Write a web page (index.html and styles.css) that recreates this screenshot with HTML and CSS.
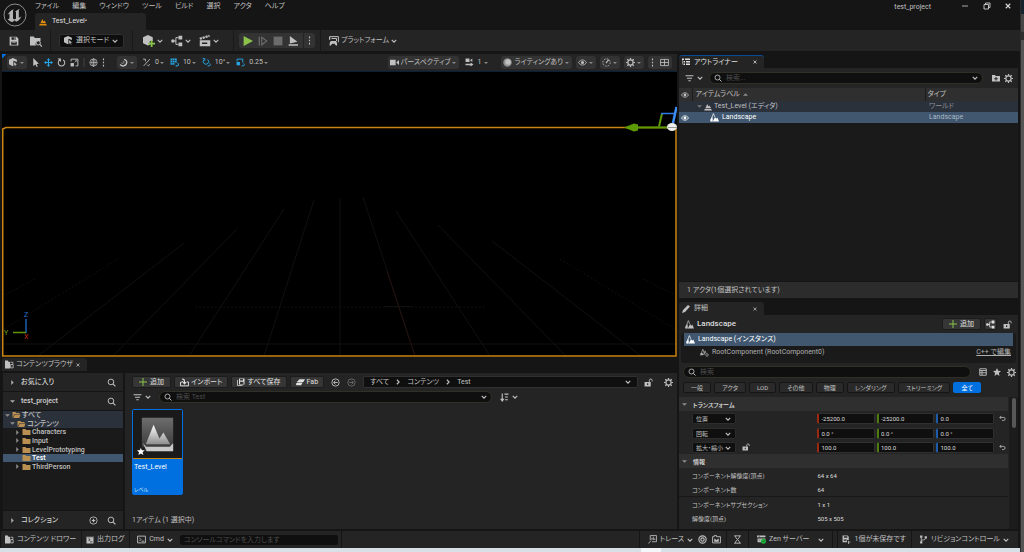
FILE: index.html
```html
<!DOCTYPE html>
<html lang="ja">
<head>
<meta charset="utf-8">
<meta name="viewport" content="width=device-width, initial-scale=1">
<title>test_project</title>
<link rel="stylesheet" href="styles.css">
</head>
<body>
<svg class="sprite" aria-hidden="true">
  <symbol id="chev" viewBox="0 0 8 8"><path d="M1 2.500 4 5.500 7 2.500" fill="none" stroke="currentColor" stroke-width="1.500"/></symbol>
  <symbol id="chevr" viewBox="0 0 8 8"><path d="M2.500 1 5.500 4 2.500 7" fill="none" stroke="currentColor" stroke-width="1.500"/></symbol>
  <symbol id="caret" viewBox="0 0 8 8"><path d="M0 2h8L4 6z" fill="currentColor"/></symbol>
  <symbol id="tri-r" viewBox="0 0 8 8"><path d="M2 0 6 4 2 8z" fill="currentColor"/></symbol>
  <symbol id="tri-u" viewBox="0 0 8 8"><path d="M0 6h8L4 2z" fill="currentColor"/></symbol>
  <symbol id="x" viewBox="0 0 8 8"><path d="M1 1 7 7M7 1 1 7" stroke="currentColor" stroke-width="1.500"/></symbol>
  <symbol id="search" viewBox="0 0 16 16"><circle cx="7" cy="7" r="5" fill="none" stroke="currentColor" stroke-width="1.700"/><path d="m10.500 10.500 4.500 4.500" stroke="currentColor" stroke-width="2"/></symbol>
  <symbol id="filter" viewBox="0 0 16 16"><path d="M1 3h14M3.500 7.500h9M6 12h4" stroke="currentColor" stroke-width="2"/></symbol>
  <symbol id="gear" viewBox="0 0 16 16"><circle cx="8" cy="8" r="4.600" fill="none" stroke="currentColor" stroke-width="2"/><path d="M8 0v3M8 13v3M0 8h3M13 8h3M2.300 2.300l2.200 2.200M11.500 11.500l2.200 2.200M13.700 2.300l-2.200 2.200M4.500 11.500l-2.200 2.200" stroke="currentColor" stroke-width="2.200"/></symbol>
  <symbol id="eye" viewBox="0 0 16 16"><path d="M1 8c3.500-6 10.500-6 14 0-3.500 6-10.500 6-14 0z" fill="none" stroke="currentColor" stroke-width="1.500"/><circle cx="8" cy="8" r="2.800" fill="currentColor"/></symbol>
  <symbol id="dots" viewBox="0 0 4 16"><path d="M1 1h2v3H1zM1 6.500h2v3H1zM1 12h2v3H1z" fill="currentColor"/></symbol>
  <symbol id="save" viewBox="0 0 16 16"><path fill-rule="evenodd" d="M1 1h11l3 3v11H1zM4 2v4h7V2zM3.500 9v5h9V9z" fill="currentColor"/><path d="M5 10.500h6M8.500 2.500h1.500v3H8.500z" stroke="currentColor"/></symbol>
  <symbol id="saveall" viewBox="0 0 16 16"><path d="M1 4v11h10" fill="none" stroke="currentColor" stroke-width="1.500"/><path fill-rule="evenodd" d="M4 1h11v12H4zM6 2v3h6V2zM6 7.500V12h7V7.500z" fill="currentColor"/></symbol>
  <symbol id="savewarn" viewBox="0 0 16 16"><path fill-rule="evenodd" d="M1 1h9l2 2v6H9v4H1zM3.500 2v3h6V2zM3 7v1h6V7zM3 9.500v1h5v-1z" fill="currentColor"/><path d="M11 10h1.500v2H15v1.500h-2.500V16H11z" fill="currentColor"/></symbol>
  <symbol id="browse" viewBox="0 0 16 16"><path d="M0 2h5l1.500 2H14v4h-2.500a3.500 3.500 0 0 0-3 6H0z" fill="currentColor"/><circle cx="11" cy="10.500" r="2.800" fill="none" stroke="currentColor" stroke-width="1.300"/><path d="m13 12.500 3 3" stroke="currentColor" stroke-width="1.500"/></symbol>
  <symbol id="drawer" viewBox="0 0 16 16"><path d="M0 1h5l1 2h3v12H0z" fill="currentColor"/><path d="M10 4h4v3M10 8h4.500v6H10z" fill="none" stroke="currentColor" stroke-width="1.500"/></symbol>
  <symbol id="mode" viewBox="0 0 16 16"><path d="M7 0 14 3v4L8 5v9l-1 .500L0 11V3z" fill="currentColor"/><path d="m8.500 6 6.500 6-3 .400 1.500 3-1.500.600-1.500-3-2 2z" fill="currentColor" stroke="#111" stroke-width=".8"/></symbol>
  <symbol id="addactor" viewBox="0 0 16 16"><path d="M6.500 0 13 3v5H9v5l-2.500 1L0 11V3z" fill="currentColor"/><path d="M11.500 7v9M7 11.500h9" stroke="#8bc34a" stroke-width="2.400"/></symbol>
  <symbol id="nodes" viewBox="0 0 16 16"><path d="M3 8h4M6.500 8V3.500H10M6.500 8v4.500H10" fill="none" stroke="currentColor" stroke-width="1.300"/><circle cx="2.500" cy="8" r="2.300" fill="currentColor"/><path d="M10 1h5v5h-5zM10 10h5v5h-5z" fill="currentColor"/></symbol>
  <symbol id="clap" viewBox="0 0 16 16"><path fill-rule="evenodd" d="M1 7h14v8H1zM4 10v2h7v-2z" fill="currentColor"/><path d="m1 5 13-4" stroke="currentColor" stroke-width="3" stroke-dasharray="3 1"/></symbol>
  <symbol id="play" viewBox="0 0 16 16"><path d="M1 0 16 8 1 16z" fill="currentColor"/></symbol>
  <symbol id="step" viewBox="0 0 16 16"><path d="M1 1h2v14H1z" fill="currentColor"/><path d="M6 2 14 8 6 14z" fill="none" stroke="currentColor" stroke-width="1.800"/></symbol>
  <symbol id="stop" viewBox="0 0 16 16"><path d="M1 1h14v14H1z" fill="currentColor"/></symbol>
  <symbol id="launch" viewBox="0 0 16 16"><path d="M3 0 15 9 3 12zM1 13h15v2.500H1z" fill="currentColor"/></symbol>
  <symbol id="platform" viewBox="0 0 16 16"><path d="M1 1h14v9M4 4h8v4" fill="none" stroke="currentColor" stroke-width="1.600"/><path d="M0 1h2v5H0zM3 8h8c1.500 1 2 3.500 2 7h-2l-2-2.500H5L3 15H1c0-3.500.500-6 2-7z" fill="currentColor"/></symbol>
  <symbol id="cursor" viewBox="0 0 16 16"><path d="M4 0 14 10l-4 .500 2 4.500-2 1-2-4.500L4 14z" fill="currentColor"/></symbol>
  <symbol id="move" viewBox="0 0 16 16"><path d="M8 2v12M2 8h12" stroke="currentColor" stroke-width="1.800"/><path d="M8 0l3 4H5zM8 16l3-4H5zM0 8l4-3v6zM16 8l-4-3v6z" fill="currentColor"/></symbol>
  <symbol id="rotate" viewBox="0 0 16 16"><path d="M5 3.500a5.800 5.800 0 1 0 6 0" fill="none" stroke="currentColor" stroke-width="1.800"/><path d="M1 1h6v6z" fill="currentColor"/></symbol>
  <symbol id="scale" viewBox="0 0 16 16"><path d="M2 6V2h12v12h-4" fill="none" stroke="currentColor" stroke-width="1.600"/><path d="M1 9h6v6H1z" fill="currentColor"/><path d="m8 8 4-4M9 4h3v3" fill="none" stroke="currentColor"/></symbol>
  <symbol id="globe" viewBox="0 0 16 16"><g fill="none" stroke="currentColor" stroke-width="1.200"><circle cx="8" cy="8" r="6.500"/><ellipse cx="8" cy="8" rx="3" ry="6.500"/><path d="M8 1v14M1.500 8h13"/></g></symbol>
  <symbol id="magnet" viewBox="0 0 16 16"><path d="M2 11.500c4 4 9 3 11-1s0-7-4-8" fill="none" stroke="currentColor" stroke-width="2.600"/><path d="M4 8.500c3 2.500 6 0 4-3.500" fill="none" stroke="currentColor" stroke-width="1.200"/></symbol>
  <symbol id="surf" viewBox="0 0 16 16"><path d="m3 14 11-12M2 2h4v4M9 12c2 3 5 1 4-1" fill="none" stroke="currentColor" stroke-width="1.600"/></symbol>
  <symbol id="gridsnap" viewBox="0 0 16 16"><path d="M1 1h11v8H8v3H1z" fill="currentColor"/><path d="M1 4.500h11M1 8h11M4.500 1v11M8 1v8" stroke="#242424" stroke-width=".8"/><path d="M10 14h2.500c3 0 3-4 1-4.500" fill="none" stroke="currentColor" stroke-width="1.800"/></symbol>
  <symbol id="rotsnap" viewBox="0 0 16 16"><path d="M4 2.500a4.800 4.800 0 1 0 6 0M1 1h4v4M10 14h2.500c3 0 3-4 1-4.500" fill="none" stroke="currentColor" stroke-width="1.700"/></symbol>
  <symbol id="sclsnap" viewBox="0 0 16 16"><path d="M2 6V2h10v6M10 14h2.500c3 0 3-4 1-4.500" fill="none" stroke="currentColor" stroke-width="1.700"/><path d="M1 7h6v6H1z" fill="currentColor"/></symbol>
  <symbol id="cam" viewBox="0 0 16 16"><path d="M0 3h10v10H0zM11 8l5-4.500v9z" fill="currentColor"/></symbol>
  <symbol id="camspeed" viewBox="0 0 16 16"><path d="M1 1h7v6H1zM9 4l4-3v6zM2 10h8V8l5 3.500L10 15v-2H2zM0 10h1v3H0z" fill="currentColor"/></symbol>
  <symbol id="ball" viewBox="0 0 16 16"><circle cx="8" cy="8" r="7.500" fill="#8f8f8f"/><circle cx="9" cy="7" r="5" fill="currentColor"/></symbol>
  <symbol id="gauge" viewBox="0 0 16 16"><circle cx="8" cy="8" r="6.500" fill="none" stroke="currentColor" stroke-width="1.500" stroke-dasharray="3 2"/><path d="m7 9 5-6" stroke="currentColor" stroke-width="2"/></symbol>
  <symbol id="quad" viewBox="0 0 16 16"><path d="M1 2.500h14v11H1zM8 2.500v11M1 8h14" fill="none" stroke="currentColor" stroke-width="1.500"/></symbol>
  <symbol id="outl" viewBox="0 0 16 16"><path d="M0 1h4v3H0zM6 1h10v3H6zM3 6h3v3H3zM8 6h8v3H8zM3 11h3v3H3zM8 11h8v3H8zM1 4h1v9H1z" fill="currentColor"/></symbol>
  <symbol id="foldadd" viewBox="0 0 16 16"><path fill-rule="evenodd" d="M0 2h6l1.500 2H16v11H0zM7 6v2.500H4.500v2H7V13h2v-2.500h2.500v-2H9V6z" fill="currentColor"/></symbol>
  <symbol id="fold" viewBox="0 0 16 12"><path d="M0 0h6l1.500 2H16v10H0z" fill="currentColor"/></symbol>
  <symbol id="foldopen" viewBox="0 0 16 12"><path d="M0 12V0h6l1.500 2H14v2H4zM4.500 5H16l-2.500 7H1.500z" fill="currentColor"/></symbol>
  <symbol id="level" viewBox="0 0 16 16"><path d="M3 10 6.500 2 9 7l2-2 3 5zM0 15l2-3.500h12L16 15z" fill="currentColor"/></symbol>
  <symbol id="land" viewBox="0 0 16 16"><path d="M1 14 6 1l2.500 6M1 14h5" fill="none" stroke="currentColor" stroke-width="1.300"/><path d="m5 15 4-8 2 3 2-2 3 7zM1 11l3-4 1 4-1 4H1z" fill="currentColor"/></symbol>
  <symbol id="comp" viewBox="0 0 16 16"><path d="m1 13 4-11 3 9M4 10l3 2 2-7 2 5" fill="none" stroke="currentColor" stroke-width="1.300"/><path d="M1 9h4v4H1z" fill="currentColor"/><circle cx="12.500" cy="12.500" r="2.300" fill="none" stroke="currentColor" stroke-width="1.200"/></symbol>
  <symbol id="pencil" viewBox="0 0 16 16"><path d="m0 16 2-6L12 0l4 3L6 14z" fill="currentColor"/></symbol>
  <symbol id="lock" viewBox="0 0 16 16"><path fill-rule="evenodd" d="M1 7h11v8H1zM5.500 9.500v3h2v-3z" fill="currentColor"/><path d="M9.500 7V4c0-3 5-3 5 0v2" fill="none" stroke="currentColor" stroke-width="1.600"/></symbol>
  <symbol id="table" viewBox="0 0 16 16"><path d="M1.500 1.500h13v13h-13zM1 5h14M1 9.500h14M6 5v9" fill="none" stroke="currentColor" stroke-width="1.800"/></symbol>
  <symbol id="star" viewBox="0 0 16 16"><path d="m8 0 2.300 5.500L16 6l-4.300 3.800L13 16l-5-3.400L3 16l1.300-6.200L0 6l5.700-.500z" fill="currentColor"/></symbol>
  <symbol id="plus" viewBox="0 0 16 16"><path d="M8 0v16M0 8h16" stroke="#8bc34a" stroke-width="2"/></symbol>
  <symbol id="import" viewBox="0 0 16 16"><path d="M1 7v7h14V7h-3M1 8l4-2" fill="none" stroke="currentColor" stroke-width="1.700"/><path d="M4 1c4 0 5 2 5 6h3l-4 5-4-5h3c0-3-1-4-3-4z" fill="currentColor"/></symbol>
  <symbol id="fab" viewBox="0 0 16 16"><path d="M4 5c0-2 2-3 4-3h8l-3 5H1zM0 11c0-2 2-3 4-3h8l-3 5H2c-1 0-2-1-2-2z" fill="currentColor"/></symbol>
  <symbol id="back" viewBox="0 0 16 16"><circle cx="8" cy="8" r="6.500" fill="none" stroke="currentColor" stroke-width="1.600"/><path d="M12 8H5M8 4.500 4.500 8 8 11.500" fill="none" stroke="currentColor" stroke-width="1.600"/></symbol>
  <symbol id="fwd" viewBox="0 0 16 16"><circle cx="8" cy="8" r="6.500" fill="none" stroke="currentColor" stroke-width="1.600"/><path d="M4 8h7M8 4.500 11.500 8 8 11.500" fill="none" stroke="currentColor" stroke-width="1.600"/></symbol>
  <symbol id="sort" viewBox="0 0 16 16"><path d="M4 1v12M8 2h7M9 7h5M9 12h5" fill="none" stroke="currentColor" stroke-width="2"/><path d="M0 10h8l-4 6z" fill="currentColor"/></symbol>
  <symbol id="circadd" viewBox="0 0 16 16"><circle cx="8" cy="8" r="6.500" fill="none" stroke="currentColor" stroke-width="1.500"/><path d="M8 5v6M5 8h6" stroke="currentColor" stroke-width="2"/></symbol>
  <symbol id="log" viewBox="0 0 16 16"><path fill-rule="evenodd" d="M1 1h2v2h2V1h2v2h2V1h2v2h2V1h2v14H1zM4 5l3 2.500L4 10h2l3-2.500L6 5zM8 11v1.500h5V11z" fill="currentColor"/></symbol>
  <symbol id="term" viewBox="0 0 16 16"><path d="M1 2h14v12H1zM4 5l3 3-3 3M8 11h5" fill="none" stroke="currentColor" stroke-width="1.600"/></symbol>
  <symbol id="trace" viewBox="0 0 16 16"><path d="M4 9V1h11v11H7M7 9V5M9.500 9V3M12 9V6M5 10l-4 5" fill="none" stroke="currentColor" stroke-width="1.500"/></symbol>
  <symbol id="rec" viewBox="0 0 16 16"><circle cx="8" cy="8" r="6.500" fill="none" stroke="currentColor" stroke-width="2"/><circle cx="8" cy="8" r="3" fill="none" stroke="currentColor" stroke-width="2"/></symbol>
  <symbol id="snap" viewBox="0 0 16 16"><path d="M1 3h3V1h4v2h7v11H1z" fill="none" stroke="currentColor" stroke-width="1.600"/><path d="M4 12V6l4 3 4-3v6z" fill="currentColor"/></symbol>
  <symbol id="hour" viewBox="0 0 16 16"><path d="M2 1.500h12M2 14.500h12M4 2c0 4 8 8 8 12M12 2c0 4-8 8-8 12" fill="none" stroke="currentColor" stroke-width="1.600"/></symbol>
  <symbol id="zen" viewBox="0 0 16 16"><path d="M0 1h15v3H0zM1 6h14v2L8 11v2H1z" fill="currentColor"/><path d="M3 2.500h2M3 9h3" stroke="#242424"/><circle cx="11.500" cy="11" r="4.500" fill="#1fb03a"/><path d="m9.500 11 1.500 1.500 2.500-3" fill="none" stroke="#0c5a1b"/></symbol>
  <symbol id="branch" viewBox="0 0 16 16"><path d="M4 3v10M4 9c6 0 8-1 8-5" fill="none" stroke="currentColor" stroke-width="1.500"/><path d="M2 1h4v4H2zM2 11h4v4H2zM10 2h4v4h-4z" fill="currentColor"/></symbol>
  <symbol id="undo" viewBox="0 0 16 16"><path d="M5 2 2 5.500 5 9M2 5.500h9c4 0 4 7 0 7H7" fill="none" stroke="currentColor" stroke-width="1.800"/></symbol>
  <symbol id="min" viewBox="0 0 16 16"><path d="M2 8h12" stroke="currentColor" stroke-width="1.500"/></symbol>
  <symbol id="restore" viewBox="0 0 16 16"><path d="M2 5h9v9H2zM5 5V2h9v9h-3" fill="none" stroke="currentColor" stroke-width="1.700"/></symbol>
</svg>

<div class="screen">
<div class="window">
  <header class="titlebar">
    <svg class="logo" viewBox="0 0 24 24" role="img" aria-label="Unreal Engine"><circle cx="12" cy="12" r="11" fill="#151515" stroke="#8d8d8d" stroke-width="1"/><path d="M4.500 12.500C5.500 9 8 7 11 6.200c-1 .8-1 1.500-1 2.300V15c0 1 .8 1.500 1.800 1.200.5-.2 1-.5 1.200-.8V9.500c0-.8-.5-1-1.200-1 1.500-.8 3-2 5.200-2.800-1 1-1.200 1.600-1.200 2.500v6.300c.8.2 1.700-.4 2.700-1.500-1 3-3 5-5.500 5.800l-1.200-1.500-2.300 1.800c-2-.2-4-1.500-5-3.300 1 .5 2 .2 2-1v-3.500c0-1-.8-.8-2 1.200z" fill="#b4b4b4"/></svg>
    <div class="titlemain">
      <nav class="menu"><button>ファイル</button><button>編集</button><button>ウィンドウ</button><button>ツール</button><button>ビルド</button><button>選択</button><button>アクタ</button><button>ヘルプ</button></nav>
      <div class="doctab"><svg class="i8 orange"><use href="#level"/></svg>Test_Level•</div>
    </div>
    <span class="project">test_project</span>
    <div class="winctl"><button aria-label="最小化"><svg class="i8"><use href="#min"/></svg></button><button aria-label="元に戻す"><svg class="i8"><use href="#restore"/></svg></button><button aria-label="閉じる"><svg class="i6"><use href="#x"/></svg></button></div>
  </header>

  <div class="maintools">
    <div class="tgroup files"><button aria-label="保存"><svg class="i10"><use href="#save"/></svg></button><button aria-label="参照"><svg class="i12"><use href="#browse"/></svg></button></div>
    <div class="tgroup"><button class="modebtn"><svg class="i9"><use href="#mode"/></svg>選択モード<svg class="i6"><use href="#chev"/></svg></button></div>
    <div class="tgroup adders"><button aria-label="追加"><svg class="i12"><use href="#addactor"/></svg><svg class="i6"><use href="#chev"/></svg></button><button aria-label="ブループリント"><svg class="i12"><use href="#nodes"/></svg><svg class="i6"><use href="#chev"/></svg></button><button aria-label="シネマティクス"><svg class="i12"><use href="#clap"/></svg><svg class="i6"><use href="#chev"/></svg></button></div>
    <div class="tgroup plays"><div class="playbox"><button class="green" aria-label="プレイ"><svg class="i10"><use href="#play"/></svg></button><button class="dim" aria-label="ステップ"><svg class="i10"><use href="#step"/></svg></button><button class="dim" aria-label="停止"><svg class="i10"><use href="#stop"/></svg></button><button aria-label="起動"><svg class="i10"><use href="#launch"/></svg></button><button class="playmore" aria-label="その他"><svg class="idots"><use href="#dots"/></svg></button></div></div>
    <div class="tgroup last"><button><svg class="i10"><use href="#platform"/></svg>プラットフォーム<svg class="i6"><use href="#chev"/></svg></button></div>
  </div>

  <main class="work">
    <div class="col">
      <section class="viewport">
        <div class="vtools">
          <button class="pill" aria-label="モード"><svg class="i9"><use href="#mode"/></svg><svg class="i3"><use href="#caret"/></svg></button>
          <div class="xf"><button aria-label="選択"><svg class="i9"><use href="#cursor"/></svg></button><button class="cyan" aria-label="移動"><svg class="i9"><use href="#move"/></svg></button><button aria-label="回転"><svg class="i9"><use href="#rotate"/></svg></button><button aria-label="拡大"><svg class="i9"><use href="#scale"/></svg></button></div>
          <div class="coord"><button aria-label="座標系"><svg class="i9"><use href="#globe"/></svg></button><button aria-label="その他"><svg class="idots"><use href="#dots"/></svg></button></div>
          <button class="pill" aria-label="スナップ"><svg class="i9"><use href="#magnet"/></svg><svg class="i3"><use href="#caret"/></svg></button>
          <div class="snaps"><button><svg class="i9"><use href="#surf"/></svg>0<svg class="i3"><use href="#caret"/></svg></button><button><svg class="i9 cyan"><use href="#gridsnap"/></svg>10<svg class="i3"><use href="#caret"/></svg></button><button><svg class="i9 cyan"><use href="#rotsnap"/></svg>10°<svg class="i3"><use href="#caret"/></svg></button><button><svg class="i9 cyan"><use href="#sclsnap"/></svg>0.25<svg class="i3"><use href="#caret"/></svg></button></div>
          <div class="vright"><button class="pill"><svg class="i9"><use href="#cam"/></svg>パースペクティブ<svg class="i3"><use href="#caret"/></svg></button><button class="speed"><svg class="i9"><use href="#camspeed"/></svg>1<svg class="i3"><use href="#caret"/></svg></button><button class="pill"><svg class="i9"><use href="#ball"/></svg>ライティングあり<svg class="i3"><use href="#caret"/></svg></button><button class="pill" aria-label="表示"><svg class="i9"><use href="#eye"/></svg><svg class="i3"><use href="#caret"/></svg></button><button class="pill" aria-label="スケーラビリティ"><svg class="i9"><use href="#gauge"/></svg><svg class="i3"><use href="#caret"/></svg></button><button class="pill" aria-label="設定"><svg class="i9"><use href="#gear"/></svg><svg class="i3"><use href="#caret"/></svg></button><div class="pill pair"><button aria-label="その他"><svg class="idots"><use href="#dots"/></svg></button><button aria-label="4 画面"><svg class="i9"><use href="#quad"/></svg></button></div></div>
        </div>
        <div class="scene">
          <svg class="floor" viewBox="2 71 675 285" preserveAspectRatio="none" aria-hidden="true">
            <g stroke="#101010" fill="none"><path d="M340 198v157M363 196l52 159M396 210l94 145M438 224l128 131M492 240l149 115M314 199l-50 156M284 208l-95 147M237 228 113 355M184 242 38 355M4 343h672"/><path d="M560 258l115 70M643 278l32 16M118 258 4 328M35 278 4 294M195 306h290" stroke-dasharray="2 2"/><path d="M384 305.500h28"/><path d="M387 270l28 85" stroke="#241010"/></g>
            <path d="M2.750 355V128l3-1.500H676V355z" fill="none" stroke="#c98412" stroke-width="1.500"/>
          </svg>
          <svg class="axes" viewBox="0 0 32 32" aria-hidden="true"><path d="M24 9v14" stroke="#1d5fb4" stroke-width="1.500"/><path d="M11 22.500h13" stroke="#5d9409" stroke-width="1.500"/><text x="22" y="7" fill="#2a74d0">Z</text><text x="2" y="25" fill="#6ba00c">Y</text><text x="22" y="29" fill="#c62b10">X</text></svg>
          <svg class="gizmo" viewBox="0 0 54 26" aria-hidden="true"><path d="M36 20.500 39 7.500" stroke="#5d9b06" stroke-width="2"/><path d="M38 7.500h15" stroke="#2b7be8" stroke-width="1.500"/><path d="m50 17 3.500-16" stroke="#3c8df5" stroke-width="2.500"/><path d="M14 21.500h36" stroke="#5d9b06" stroke-width="2"/><path d="m1 21.500 10-4 4 1v6l-4 1z" fill="#5d9b06"/><ellipse cx="49" cy="21" rx="5" ry="4" fill="#eee"/><path d="M45 21.500h9" stroke="#999"/></svg>
        </div>
      </section>

      <section class="browser">
        <div class="tabs"><div class="tab cb"><svg class="i9"><use href="#drawer"/></svg>コンテンツブラウザ<button aria-label="閉じる"><svg class="i4"><use href="#x"/></svg></button></div></div>
        <div class="cbody">
          <aside class="sources">
            <div class="srcrow"><svg class="i5"><use href="#tri-r"/></svg><b>お気に入り</b><button aria-label="検索"><svg class="i9"><use href="#search"/></svg></button></div>
            <div class="srcrow"><svg class="i5"><use href="#caret"/></svg><b>test_project</b><button aria-label="検索"><svg class="i9"><use href="#search"/></svg></button></div>
            <div class="treebox"><ul class="tree">
              <li class="anc"><svg class="i5"><use href="#caret"/></svg><svg class="ifold"><use href="#foldopen"/></svg>すべて</li>
              <li class="anc d1"><svg class="i5"><use href="#caret"/></svg><svg class="ifold"><use href="#foldopen"/></svg>コンテンツ</li>
              <li class="d2"><svg class="i5"><use href="#tri-r"/></svg><svg class="ifold"><use href="#fold"/></svg>Characters</li>
              <li class="d2"><svg class="i5"><use href="#tri-r"/></svg><svg class="ifold"><use href="#fold"/></svg>Input</li>
              <li class="d2"><svg class="i5"><use href="#tri-r"/></svg><svg class="ifold"><use href="#fold"/></svg>LevelPrototyping</li>
              <li class="d2 sel"><span class="i5"></span><svg class="ifold"><use href="#fold"/></svg>Test</li>
              <li class="d2"><svg class="i5"><use href="#tri-r"/></svg><svg class="ifold"><use href="#fold"/></svg>ThirdPerson</li>
            </ul></div>
            <div class="srcrow"><svg class="i5"><use href="#tri-r"/></svg><b>コレクション</b><button aria-label="追加"><svg class="i9"><use href="#circadd"/></svg></button><button aria-label="検索"><svg class="i9"><use href="#search"/></svg></button></div>
          </aside>
          <div class="assets">
            <div class="abar">
              <button class="btn"><svg class="i8"><use href="#plus"/></svg>追加</button><button class="btn"><svg class="i9"><use href="#import"/></svg>インポート</button><button class="btn"><svg class="i8"><use href="#saveall"/></svg>すべて保存</button><button class="btn"><svg class="i9"><use href="#fab"/></svg>Fab</button>
              <div class="hist"><button aria-label="戻る"><svg class="i9"><use href="#back"/></svg></button><button class="dim" aria-label="進む"><svg class="i9"><use href="#fwd"/></svg></button></div>
              <nav class="crumbs"><a href="#">すべて</a><svg class="i6"><use href="#chevr"/></svg><a href="#">コンテンツ</a><svg class="i6"><use href="#chevr"/></svg><a href="#">Test</a><svg class="i6 end"><use href="#chev"/></svg></nav>
              <div class="aend"><button aria-label="ロック"><svg class="i9"><use href="#lock"/></svg></button><button aria-label="設定"><svg class="i9"><use href="#gear"/></svg></button></div>
            </div>
            <div class="afilter"><button class="fbtn" aria-label="フィルタ"><svg class="i9"><use href="#filter"/></svg><svg class="i6"><use href="#chev"/></svg></button><label class="search"><svg class="i8"><use href="#search"/></svg><input type="text" placeholder="検索 Test" aria-label="検索 Test"><svg class="i6"><use href="#chev"/></svg></label><button class="fbtn" aria-label="並べ替え"><svg class="i9"><use href="#sort"/></svg><svg class="i6"><use href="#chev"/></svg></button></div>
            <div class="tiles"><article class="tile"><div class="thumb"><svg viewBox="0 0 48 48" aria-hidden="true"><defs><linearGradient id="bg" x2="0" y2="1"><stop offset="0" stop-color="#6d6d6d"/><stop offset="1" stop-color="#353535"/></linearGradient><linearGradient id="fg" x2="0" y2="1"><stop offset="0" stop-color="#fff"/><stop offset="1" stop-color="#8e8e8e"/></linearGradient></defs><path d="M8 7h32v34H8z" fill="url(#bg)"/><path d="m12 34 8-20 6 14 4-6 7 12z" fill="url(#fg)"/><path d="m9 33 3 3h25l3-3v8H13z" fill="#c9c9c9"/><path d="M12 36h25" stroke="#444"/><path d="M3 37h8v8H3z" fill="#1d1d1d"/><path d="m7 37.500 1 2.500 3 .2-2.200 2 .8 2.800-2.600-1.500L4.400 45l.8-2.800-2.200-2 3-.2z" fill="#fff"/></svg></div><div class="tname">Test_Level</div><div class="ttype">レベル</div></article></div>
            <div class="count">1アイテム (1 選択中)</div>
          </div>
        </div>
      </section>
    </div>

    <div class="col">
      <section class="outliner">
        <div class="tabs"><div class="tab active"><svg class="i8"><use href="#outl"/></svg>アウトライナー<button aria-label="閉じる"><svg class="i4"><use href="#x"/></svg></button></div></div>
        <div class="otools"><button class="fbtn" aria-label="フィルタ"><svg class="i9"><use href="#filter"/></svg><svg class="i6"><use href="#chev"/></svg></button><label class="search"><svg class="i8"><use href="#search"/></svg><input type="text" placeholder="検索..." aria-label="検索"><svg class="i6"><use href="#chev"/></svg></label><button aria-label="フォルダ作成"><svg class="i8"><use href="#foldadd"/></svg></button><button aria-label="設定"><svg class="i9"><use href="#gear"/></svg></button></div>
        <div class="olist">
          <table><thead><tr><th class="ceye"><svg class="i8"><use href="#eye"/></svg></th><th><span>アイテムラベル<svg class="i5"><use href="#tri-u"/></svg></span></th><th class="ctype">タイプ</th></tr></thead>
          <tbody><tr class="anc"><td></td><td><span class="o1"><svg class="i5 grey"><use href="#caret"/></svg><svg class="i8"><use href="#level"/></svg>Test_Level (エディタ)</span></td><td>ワールド</td></tr>
          <tr class="sel"><td class="ceye"><svg class="i8"><use href="#eye"/></svg></td><td><span class="o2"><svg class="i9"><use href="#land"/></svg>Landscape</span></td><td>Landscape</td></tr></tbody></table>
        </div>
        <div class="ofoot">1 アクタ(1個選択されています)</div>
      </section>

      <section class="details">
        <div class="tabs"><div class="tab"><svg class="i8"><use href="#pencil"/></svg>詳細<button aria-label="閉じる"><svg class="i4"><use href="#x"/></svg></button></div></div>
        <div class="dbody">
          <div class="dtitle"><svg class="i9"><use href="#land"/></svg><h2>Landscape</h2><button class="btn"><svg class="i8"><use href="#plus"/></svg>追加</button><button class="btn sq" aria-label="ブループリント"><svg class="i9"><use href="#nodes"/></svg></button><button aria-label="ロック"><svg class="i9"><use href="#lock"/></svg></button></div>
          <div class="comps"><div class="comp sel"><svg class="i9"><use href="#land"/></svg>Landscape (インスタンス)</div><div class="comp sub"><svg class="i9"><use href="#comp"/></svg>RootComponent (RootComponent0)<a href="#">C++ で編集</a></div></div>
          <div class="dsearch"><label class="search"><svg class="i8"><use href="#search"/></svg><input type="text" placeholder="検索" aria-label="検索"></label><button aria-label="表"><svg class="i8"><use href="#table"/></svg></button><button aria-label="お気に入り"><svg class="i8"><use href="#star"/></svg></button><button aria-label="設定"><svg class="i9"><use href="#gear"/></svg></button></div>
          <div class="chips"><button>一般</button><button>アクタ</button><button>LOD</button><button>その他</button><button>物理</button><button>レンダリング</button><button>ストリーミング</button><button class="on">全て</button></div>
          <div class="dscroll">
            <div class="props">
              <h3><svg class="i5"><use href="#caret"/></svg>トランスフォーム</h3>
              <div class="prop"><div class="pname"><label class="sel-w"><select aria-label="位置"><option>位置</option></select><svg class="i6"><use href="#chev"/></svg></label></div><div class="pval"><input class="r" aria-label="位置 X" value="-25200.0"><input class="g" aria-label="位置 Y" value="-25200.0"><input class="b" aria-label="位置 Z" value="0.0"></div><button aria-label="リセット"><svg class="i7"><use href="#undo"/></svg></button></div>
              <div class="prop"><div class="pname"><label class="sel-w"><select aria-label="回転"><option>回転</option></select><svg class="i6"><use href="#chev"/></svg></label></div><div class="pval"><input class="r" aria-label="回転 X" value="0.0 °"><input class="g" aria-label="回転 Y" value="0.0 °"><input class="b" aria-label="回転 Z" value="0.0 °"></div></div>
              <div class="prop"><div class="pname"><label class="sel-w"><select aria-label="拡大・縮小"><option>拡大・縮小</option></select><svg class="i6"><use href="#chev"/></svg></label><button aria-label="比率を固定"><svg class="i8"><use href="#lock"/></svg></button></div><div class="pval"><input class="r" aria-label="拡大 X" value="100.0"><input class="g" aria-label="拡大 Y" value="100.0"><input class="b" aria-label="拡大 Z" value="100.0"></div><button aria-label="リセット"><svg class="i7"><use href="#undo"/></svg></button></div>
              <h3><svg class="i5"><use href="#caret"/></svg>情報</h3>
              <div class="prop"><div class="pname">コンポーネント解像度(頂点)</div><div class="ptext">64 x 64</div></div>
              <div class="prop line"><div class="pname">コンポーネント数</div><div class="ptext">64</div></div>
              <div class="prop"><div class="pname">コンポーネントサブセクション</div><div class="ptext">1 x 1</div></div>
              <div class="prop"><div class="pname">解像度(頂点)</div><div class="ptext">505 x 505</div></div>
            </div>
            <div class="sbar"><div class="sthumb"></div></div>
          </div>
        </div>
      </section>
    </div>
  </main>

  <footer class="status">
    <div class="sg"><button><svg class="i9"><use href="#drawer"/></svg>コンテンツ ドロワー</button></div>
    <div class="sg"><button><svg class="i8"><use href="#log"/></svg>出力ログ</button></div>
    <div class="sg cmd"><button><svg class="i9"><use href="#term"/></svg>Cmd<svg class="i6"><use href="#chev"/></svg></button><input type="text" placeholder="コンソールコマンドを入力します" aria-label="コンソールコマンド"></div>
    <div class="sg grow"></div>
    <div class="sg trace"><button><svg class="i9"><use href="#trace"/></svg>トレース<svg class="i6"><use href="#chev"/></svg></button><button aria-label="記録"><svg class="i9"><use href="#rec"/></svg></button><button aria-label="スナップショット"><svg class="i9"><use href="#snap"/></svg></button></div>
    <div class="sg hour"><button aria-label="待機"><svg class="i9"><use href="#hour"/></svg></button></div>
    <div class="sg zen"><button><svg class="i9"><use href="#zen"/></svg>Zen サーバー<svg class="i6"><use href="#chev"/></svg></button></div>
    <div class="sg thin"></div>
    <div class="sg"><button><svg class="i9"><use href="#savewarn"/></svg>1個が未保存です</button></div>
    <div class="sg"><button><svg class="i9"><use href="#branch"/></svg>リビジョンコントロール<svg class="i6"><use href="#chev"/></svg></button></div>
  </footer>
  <div class="taskstrip"><span></span></div>
</div>
<div class="edge"></div>
</div>
</body>
</html>
```

FILE: styles.css
```css
* { box-sizing: border-box; }
body {
  margin: 0;
  background: #151515;
  color: #c0c0c0;
  font: 7px/9px Roboto, "Noto Sans CJK JP", sans-serif;
  font-feature-settings: "palt";
  overflow: hidden;
}
button, input, select {
  font: inherit;
  font-feature-settings: inherit;
  color: inherit;
  background: none;
  border: 0;
  padding: 0;
  margin: 0;
}
button { display: inline-flex; align-items: center; gap: 2px; white-space: nowrap; }
input { min-width: 0; outline: 0; }
input::placeholder { color: #4c4c4c; opacity: 1; }
a { color: inherit; text-decoration: none; }
h2, h3, ul { margin: 0; padding: 0; font-weight: 500; }
svg { display: block; flex: none; }
.sprite { position: absolute; width: 0; height: 0; }

.i3 { width: 4px; height: 4px; color: #8a8a8a; }
.i4 { width: 4px; height: 4px; }
.i5 { width: 5px; height: 5px; flex: none; color: #8c8c8c; }
.i6 { width: 6px; height: 6px; }
.i7 { width: 7px; height: 7px; }
.i8 { width: 8px; height: 8px; }
.i9 { width: 9px; height: 9px; }
.i10 { width: 10px; height: 10px; }
.i12 { width: 12px; height: 12px; }
.idots { width: 3px; height: 9px; }
.orange { color: #e08c0c; }
.green { color: #8bc34a; }
.cyan { color: #26a6e6; }
.dim { color: #6c6c6c; }
.grey { color: #777; }

.screen { display: grid; grid-template-columns: minmax(0, 1fr) 4px; height: 100vh; min-height: 480px; }
.edge { background: linear-gradient(90deg, #2c2c2c 0 1px, transparent 1px), linear-gradient(#16232c 0 14px, #464646 14px 32px, #2e2e2e 32px 40px, #555 40px 100%); }
.window { display: grid; grid-template-rows: 30px 21px minmax(0, 1fr) 17px 4px; min-width: 0; }

.titlebar { display: flex; padding: 0 9px 0 3px; }
.logo { width: 24px; height: 24px; margin-top: 3px; }
.titlemain { flex: 1; display: flex; flex-direction: column; align-items: flex-start; }
.menu { display: flex; gap: 13px; height: 13px; padding-left: 8px; }
.doctab { display: flex; align-items: center; gap: 5px; width: 111px; height: 17px; margin-left: 8px; padding-left: 4px; background: #242424; border-radius: 3px 3px 0 0; color: #e0e0e0; }
.project { margin: 3px 30px 0 0; }
.winctl { display: flex; gap: 14px; height: 12px; color: #d8d8d8; }

.maintools { display: flex; align-items: stretch; background: #242424; }
.tgroup { display: flex; align-items: center; padding: 0 8px; border-right: 1px solid #191919; }
.tgroup.last { border: 0; }
.files { gap: 11px; padding: 0 8px 0 9px; }
.adders { gap: 8px; padding: 0 14px 0 10px; }
.plays { padding: 0 5px; }
.modebtn { height: 14px; padding: 0 5px 0 4px; gap: 3px; background: #0e0e0e; border: 1px solid #2f2f2f; border-radius: 3px; }
.playbox { display: flex; gap: 5px; height: 15px; padding: 0 4px; background: #333; border-radius: 3px; }
.playmore { border-left: 1px solid #242424; padding-left: 4px; }

.work { display: grid; grid-template-columns: minmax(0, 675fr) minmax(0, 339fr); padding: 3px 2px 2px 2px; column-gap: 2px; min-height: 0; }
.col { display: flex; flex-direction: column; min-width: 0; min-height: 0; }

.viewport { flex: 1; min-height: 0; display: flex; flex-direction: column; }
.vtools { display: flex; align-items: center; height: 17px; padding: 0 5px; background: linear-gradient(135deg, #0070e0 3px, transparent 3px), #242424; flex: none; }
.pill { display: inline-flex; align-items: center; height: 13px; padding: 0 3px 0 2px; background: #333; border-radius: 3px; }
.xf { display: flex; gap: 4px; padding: 0 4px; border-right: 2px solid #333; }
.coord { display: flex; gap: 4px; padding: 0 12px 0 4px; }
.snaps { display: flex; gap: 6px; padding-left: 5px; }
.snaps button { gap: 4px; }
.snaps .i3 { margin-left: -3px; }
.vright { display: flex; gap: 4px; margin-left: auto; }
.speed { padding: 0 9px 0 2px; gap: 3px; }
.pair { gap: 6px; padding: 0 3px; }
.scene { position: relative; flex: 1; min-height: 0; background: #000; border-top: 1px solid #0b2038; }
.floor { width: 100%; height: 100%; }
.axes { position: absolute; left: 0; bottom: 15px; width: 32px; height: 32px; font-size: 7px; }
.gizmo { position: absolute; right: 0; top: 34px; width: 54px; height: 26px; }

.tabs { display: flex; align-items: flex-end; height: 14px; flex: none; }
.tab { display: flex; align-items: center; gap: 4px; width: 85px; height: 13px; padding: 0 7px 0 3px; background: #242424; border-radius: 3px 3px 0 0; color: #c0c0c0; white-space: nowrap; }
.tab button { margin-left: auto; }
.tab.active { border-top: 1px solid #0a4a92; color: #e0e0e0; }
.tab.cb { gap: 2px; }

.browser { display: flex; flex-direction: column; height: 172px; flex: none; }
.browser .tabs { height: 15px; padding-bottom: 1px; }
.cbody { flex: 1; display: grid; grid-template-columns: 121px minmax(0, 1fr); column-gap: 2px; min-height: 0; margin-top: 1px; }
.sources { display: flex; flex-direction: column; background: #151515; gap: 1px; padding-left: 1px; }
.srcrow { display: flex; align-items: center; gap: 6px; height: 18px; padding: 0 7px; background: #242424; }
.srcrow .i5 { color: #aaa; }
.srcrow b { font-weight: 500; flex: 1; color: #d0d0d0; }
.srcrow button + button { margin-left: 3px; }
.treebox { flex: 1; background: #1a1a1a; }
.tree { list-style: none; display: grid; grid-auto-rows: 1fr; height: 60px; line-height: 8px; }
.tree li { display: flex; align-items: center; gap: 1px; padding-left: 2px; }
.tree .d1 { padding-left: 7px; }
.tree .d2 { padding-left: 12px; }
.ifold { width: 9px; height: 6px; color: #b98f52; margin-left: 1px; }
.anc { background: #2b313b; }
.sel { background: #40576f; color: #fff; }

.assets { display: flex; flex-direction: column; background: #242424; padding: 3px 4px 4px 7px; min-width: 0; }
.abar { display: flex; gap: 3px; height: 12px; }
.btn { height: 12px; padding: 0 6px; gap: 3px; background: #363636; border: 1px solid #1c1c1c; border-radius: 2px; color: #e0e0e0; justify-content: center; }
.abar .btn { padding: 0 5px; gap: 2px; }
.abar .btn:first-child { padding: 0 6px; gap: 3px; }
.hist { display: flex; gap: 7px; padding: 0 4px; }
.crumbs { flex: 1; display: flex; align-items: center; gap: 6px; padding: 0 6px; background: #0f0f0f; border: 1px solid #303030; border-radius: 2px; }
.end { margin-left: auto; }
.aend { display: flex; gap: 11px; padding-left: 3px; }
.afilter { display: flex; align-items: center; gap: 8px; margin-top: 3px; padding: 0 155px 0 1px; }
.fbtn { gap: 3px; }
.search { flex: 1; display: flex; align-items: center; gap: 4px; height: 12px; padding: 0 4px; background: #0f0f0f; border: 1px solid #303028; border-radius: 6px; min-width: 0; }
.search input { flex: 1; }
.tiles { flex: 1; padding-top: 6px; }
.tile { width: 51px; height: 86px; display: flex; flex-direction: column; background: #0070e0; border: 1px solid #0070e0; border-radius: 2px; color: #fff; }
.thumb { background: #1a1a1a; border-bottom: 1px solid #c98412; height: 49px; padding: 1px 0 0; }
.thumb svg { width: 47px; height: 47px; margin: 0 auto; }
.tname { padding: 4px 1px; flex: 1; }
.ttype { font-size: 5px; line-height: 7px; padding: 0 1px 1px; color: #cfe3fb; }

.outliner { display: flex; flex-direction: column; height: 244px; flex: none; }
.otools { display: flex; align-items: center; gap: 9px; height: 20px; padding: 0 5px 0 6px; background: #242424; flex: none; }
.otools .search { margin-left: -3px; }
.otools button + button { margin-left: -5px; }
.olist { flex: 1; background: #1a1a1a; }
table { width: 100%; table-layout: fixed; border-collapse: collapse; }
th, td { padding: 0 0 0 3px; height: 11px; text-align: left; font-weight: 400; line-height: 9px; }
th { height: 13px; background: #2f2f2f; border-left: 1px solid #1c1c1c; }
th:first-child { width: 13px; border: 0; }
.ctype { width: 93px; padding-left: 2px; }
.ceye { padding-left: 2px; }
td:last-child { padding-left: 4px; color: #909090; }
.sel td:last-child { color: #a9b8c6; }
th span, td span { display: flex; align-items: center; gap: 3px; }
td .o1 { padding-left: 2px; gap: 2px; }
.o2 { padding-left: 15px; }
.ofoot { height: 17px; padding: 4px 8px; background: #2c2c2c; border-top: 1px solid #151515; flex: none; }

.details { flex: 1; display: flex; flex-direction: column; min-height: 0; }
.details .tabs { height: 17px; }
.dbody { flex: 1; display: flex; flex-direction: column; background: #242424; min-height: 0; }
.dtitle { display: flex; align-items: center; gap: 3px; height: 18px; padding: 0 6px; flex: none; }
.dtitle h2 { flex: 1; font-size: 8px; line-height: 10px; color: #dcdcdc; }
.dtitle > button:last-child { margin-left: 3px; }
.sq { padding: 0 1px; }
.comps { margin: 0 2px; padding: 0 3px 4px 3px; background: #1a1a1a; border-radius: 3px; flex: none; }
.comp { display: flex; align-items: center; gap: 3px; height: 13px; padding: 0 2px; }
.comp.sub { padding-left: 16px; color: #b0b0b0; }
.comp a { margin-left: auto; text-decoration: underline; }
.dsearch { display: flex; align-items: center; gap: 6px; height: 12px; margin-top: 3px; padding: 0 2px 0 4px; flex: none; }
.dsearch .search + button { margin-left: 2px; }
.chips { display: flex; gap: 3px; margin: 4px 37px 4px 4px; flex: none; }
.chips button { flex: auto; justify-content: center; height: 11px; padding: 0 7px; font-size: 6px; border: 1px solid #151515; border-radius: 2px; background: #2a2a2a; }
.chips .on { background: #0070e0; color: #fff; border-color: #0070e0; }
.dscroll { flex: 1; min-height: 0; overflow: hidden; display: grid; grid-template-columns: minmax(0, 1fr) 10px; }
.props { min-height: 0; font-size: 6px; }
h3 { display: flex; align-items: center; gap: 6px; height: 14px; padding-left: 3px; background: #2f2f2f; font-size: 6px; color: #e0e0e0; }
.prop { display: grid; grid-template-columns: minmax(0, 125fr) minmax(0, 176fr) 13px; align-items: center; height: 14px; padding: 0 1px 0 13px; }
h3 + .prop { height: 15px; }
.prop.line { border-bottom: 1px solid #181818; }
.pname, .pval { display: flex; align-items: center; }
.pname { gap: 6px; }
.pval { gap: 2px; }
.pval input { flex: 1; width: 0; height: 11px; padding-left: 2px; background: #0f0f0f; border: 1px solid #303030; border-left-width: 2px; border-radius: 2px; color: #dcdcdc; }
.pval .r { border-left-color: #9c2a12; }
.pval .g { border-left-color: #4f7d0d; }
.pval .b { border-left-color: #1c5ca8; }
.prop > button { justify-self: end; padding-right: 1px; }
.ptext { color: #dcdcdc; }
.sel-w { position: relative; display: block; width: 44px; }
.sel-w select { appearance: none; width: 100%; height: 11px; padding-left: 3px; background: #0f0f0f; border: 1px solid #2c2c2c; border-radius: 2px; }
.sel-w svg { position: absolute; right: 5px; top: 3px; pointer-events: none; }
.sbar { background: #1c1c1c; margin-left: 1px; padding: 1px 2px; }
.sthumb { width: 4px; height: 30px; border-radius: 2px; background: #575757; margin: 0 auto; }

.status { display: flex; background: #242424; margin-right: 2px; margin-left: 1px; }
.sg { display: flex; align-items: center; gap: 5px; padding: 0 5px 0 4px; border-right: 1px solid #151515; }
.sg:last-child { border: 0; padding: 0 9px 0 7px; }
.sg button { gap: 3px; }
.cmd { padding: 0 3px 0 7px; gap: 7px; }
.cmd input { width: 158px; height: 10px; padding-left: 4px; background: #0f0f0f; border-radius: 2px; }
.grow { flex: 1; }
.trace { padding-left: 8px; }
.hour { padding: 0 6px; }
.zen { padding: 0 8px; }
.zen .i6 { margin-left: 6px; }
.thin { padding: 0 2px; }
.taskstrip { background: #d8e0e7; display: flex; justify-content: center; }
.taskstrip span { width: 20px; margin-left: 282px; background: #f4f7f9; }
```
